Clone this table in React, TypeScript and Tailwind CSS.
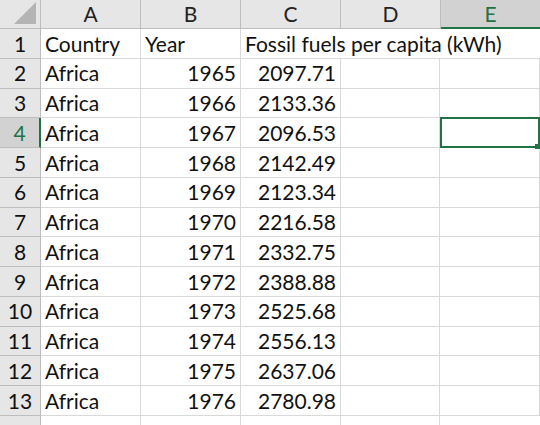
import React from 'react';

const ROWS: Array<[string, string, string]> = [
    ['Africa', '1965', '2097.71'],
    ['Africa', '1966', '2133.36'],
    ['Africa', '1967', '2096.53'],
    ['Africa', '1968', '2142.49'],
    ['Africa', '1969', '2123.34'],
    ['Africa', '1970', '2216.58'],
    ['Africa', '1971', '2332.75'],
    ['Africa', '1972', '2388.88'],
    ['Africa', '1973', '2525.68'],
    ['Africa', '1974', '2556.13'],
    ['Africa', '1975', '2637.06'],
    ['Africa', '1976', '2780.98'],
];

const COLS = ['A', 'B', 'C', 'D', 'E'];
const SELECTED_ROW = 4;

const cell = 'h-[29.75px] shrink-0 border-r border-b border-[#d9d9d9] whitespace-nowrap flex items-center';

function ColHeader({ label }: { label: string }) {
    const active = label === 'E';
    return (
        <div
            className={
                active
                    ? 'w-[100px] shrink-0 h-[29px] flex items-center justify-center bg-[#d2d2d2] text-[#217346] border-b-2 border-[#217346] border-r border-r-[#bdbdbd]'
                    : 'w-[100px] shrink-0 h-[29px] flex items-center justify-center bg-[#e6e6e6] text-[#222] border-b border-r border-[#bdbdbd]'
            }
        >
            {label}
        </div>
    );
}

export default function App() {
    return (
        <div className="w-[540px] h-[425px] overflow-hidden bg-white text-[21px] text-[#111] font-['Lato','Open_Sans',sans-serif]">
            <div className="flex">
                <div className="relative w-[41px] shrink-0 h-[29px] bg-[#e6e6e6] border-r border-b border-[#bdbdbd]">
                    <div className="absolute right-[4px] bottom-[4px] w-0 h-0 border-l-[22px] border-l-transparent border-b-[22px] border-b-[#b4b4b4]" />
                </div>
                {COLS.map((c) => (
                    <ColHeader key={c} label={c} />
                ))}
            </div>

            <div className="flex">
                <div className="w-[41px] shrink-0 flex items-center justify-center h-[29.75px] bg-[#e6e6e6] border-r border-b border-[#bdbdbd]">1</div>
                <div className={`${cell} w-[100px] pl-[4px]`}>Country</div>
                <div className={`${cell} w-[100px] pl-[4px]`}>Year</div>
                <div className={`${cell} w-[299px] border-r-0 pl-[4px]`}>Fossil fuels per capita (kWh)</div>
            </div>

            {ROWS.map(([country, year, value], i) => {
                const rowNum = i + 2;
                const selected = rowNum === SELECTED_ROW;
                return (
                    <div key={rowNum} className="flex">
                        <div
                            className={
                                selected
                                    ? 'w-[41px] shrink-0 flex items-center justify-center h-[29.75px] bg-[#d2d2d2] text-[#217346] border-r-2 border-r-[#217346] border-b border-b-[#bdbdbd]'
                                    : 'w-[41px] shrink-0 flex items-center justify-center h-[29.75px] bg-[#e6e6e6] border-r border-b border-[#bdbdbd]'
                            }
                        >
                            {rowNum}
                        </div>
                        <div className={`${cell} w-[100px] pl-[4px]`}>{country}</div>
                        <div className={`${cell} w-[100px] justify-end pr-[4px]`}>{year}</div>
                        <div className={`${cell} w-[100px] justify-end pr-[4px]`}>{value}</div>
                        <div className={`${cell} w-[99px]`} />
                        {selected ? (
                            <div className="relative w-[100px] h-[30.75px] shrink-0 border-2 border-[#217346] -mt-px">
                                <div className="absolute -right-[2px] -bottom-[3px] w-[5px] h-[5px] bg-[#217346]" />
                            </div>
                        ) : (
                            <div className={`${cell} w-[100px]`} />
                        )}
                    </div>
                );
            })}
            <div className="flex">
                <div className="w-[41px] shrink-0 h-[10px] bg-[#e6e6e6] border-r border-[#bdbdbd]" />
                <div className="w-[100px] h-[10px] shrink-0 border-r border-[#d9d9d9]" />
                <div className="w-[100px] h-[10px] shrink-0 border-r border-[#d9d9d9]" />
                <div className="w-[100px] h-[10px] shrink-0 border-r border-[#d9d9d9]" />
                <div className="w-[99px] h-[10px] shrink-0 border-r border-[#d9d9d9]" />
            </div>
        </div>
    );
}
